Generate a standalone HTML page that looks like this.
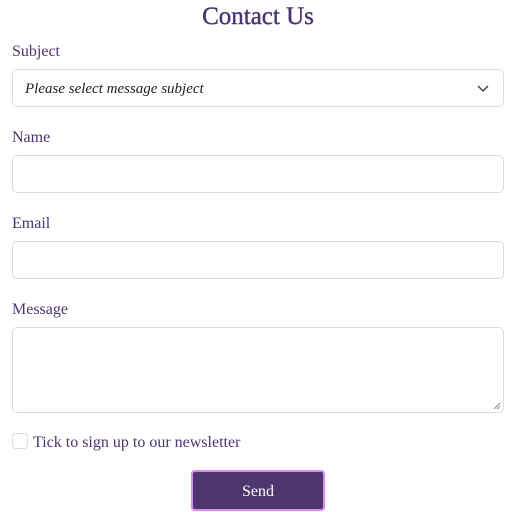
<!DOCTYPE html>
<html><head><style>
*{box-sizing:border-box;margin:0;padding:0}
body{width:516px;height:511px;background:#fff;font-family:"Liberation Serif",serif;color:#4b3570;position:relative;overflow:hidden}
.a{position:absolute}
h1{position:absolute;left:0;width:516px;top:3px;text-align:center;font-size:25px;font-weight:normal;color:#4b3570;-webkit-text-stroke:0.4px #4b3570}
.l{position:absolute;left:12px;font-size:16px;color:#4b3570}
.box{position:absolute;left:12px;width:492px;border:1px solid #dcdbe0;border-radius:5px;background:#fff}
</style></head><body>
<h1>Contact Us</h1>
<div class="l" style="top:43px">Subject</div>
<div class="box" style="top:69px;height:38px"><span class="a" style="left:12px;top:11px;font-style:italic;font-size:15px;color:#222">Please select message subject</span>
<svg class="a" style="left:464px;top:13px" width="12" height="10" viewBox="0 0 12 10"><path d="M1 3l5 5 5-5" fill="none" stroke="#333" stroke-width="1.3"/></svg></div>
<div class="l" style="top:129px">Name</div>
<div class="box" style="top:155px;height:38px"></div>
<div class="l" style="top:215px">Email</div>
<div class="box" style="top:241px;height:38px"></div>
<div class="l" style="top:301px">Message</div>
<div class="box" style="top:327px;height:86px"><svg class="a" style="right:2px;bottom:2px" width="8" height="8"><path d="M1 7l6-6M4 7l3-3" stroke="#888" stroke-width="1"/></svg></div>
<div class="a" style="left:12px;top:433px;width:16px;height:16px;border:1px solid #dcdbe0;border-radius:4px"></div>
<div class="a" style="left:33px;top:434px;font-size:16px">Tick to sign up to our newsletter</div>
<div class="a" style="left:191px;top:470px;width:134px;height:41px;border:2px solid #d98cef;border-radius:4px;background:#4e376e;color:#fff;text-align:center;line-height:40px;font-size:16px">Send</div>
</body></html>
